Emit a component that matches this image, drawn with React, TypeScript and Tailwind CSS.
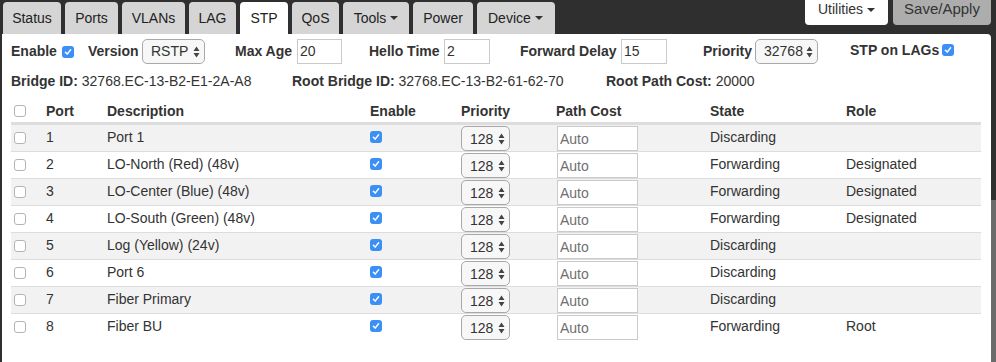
import React from "react";

const tabs = [
  { label: "Status", w: "w-[58px]" },
  { label: "Ports", w: "w-[53px]" },
  { label: "VLANs", w: "w-[63px]" },
  { label: "LAG", w: "w-[47px]" },
  { label: "STP", w: "w-[48px]", active: true },
  { label: "QoS", w: "w-[47px]" },
  { label: "Tools", w: "w-[66px]", caret: true },
  { label: "Power", w: "w-[60px]" },
  { label: "Device", w: "w-[78px]", caret: true },
];

const ports = [
  { n: 1, desc: "Port 1", state: "Discarding", role: "" },
  { n: 2, desc: "LO-North (Red) (48v)", state: "Forwarding", role: "Designated" },
  { n: 3, desc: "LO-Center (Blue) (48v)", state: "Forwarding", role: "Designated" },
  { n: 4, desc: "LO-South (Green) (48v)", state: "Forwarding", role: "Designated" },
  { n: 5, desc: "Log (Yellow) (24v)", state: "Discarding", role: "" },
  { n: 6, desc: "Port 6", state: "Discarding", role: "" },
  { n: 7, desc: "Fiber Primary", state: "Discarding", role: "" },
  { n: 8, desc: "Fiber BU", state: "Forwarding", role: "Root" },
];

const cols = "grid grid-cols-[30px_61px_263px_91px_95px_154px_136px_140px]";

function Caret() {
  return (
    <svg width="8" height="4" viewBox="0 0 8 4" className="ml-[4px]">
      <path d="M0 0h8L4 4z" fill="#333" />
    </svg>
  );
}

function Arrows() {
  return (
    <svg width="7" height="12" viewBox="0 0 7 12">
      <path d="M3.5 0.5L6.5 5H0.5Z M0.5 7H6.5L3.5 11.5Z" fill="#444" />
    </svg>
  );
}

function Check({ on }: { on?: boolean }) {
  if (!on) {
    return <span className="block h-[12px] w-[12px] rounded-[3px] border border-[#b4b4b4] bg-white" />;
  }
  return (
    <span className="flex h-[12px] w-[12px] items-center justify-center rounded-[3px] bg-[#3b8ff6]">
      <svg width="10" height="10" viewBox="0 0 10 10">
        <path d="M2.4 5.2L4.2 7.1L7.6 2.8" fill="none" stroke="#fff" strokeWidth="1.5" strokeLinecap="round" strokeLinejoin="round" />
      </svg>
    </span>
  );
}

function Select({ value, w }: { value: string; w: string }) {
  return (
    <div className={`flex h-[25px] ${w} items-center justify-between rounded-[5px] border border-[#a8a8a8] bg-[#f7f7f7] pl-[8px] pr-[4px]`}>
      <span>{value}</span>
      <Arrows />
    </div>
  );
}

function Box({ value, w, placeholder }: { value?: string; w: string; placeholder?: string }) {
  return (
    <div className={`flex h-[25px] ${w} items-center border border-[#cacaca] bg-white pl-[2px]`}>
      {value ? <span>{value}</span> : <span className="text-[#6f6f6f]">{placeholder}</span>}
    </div>
  );
}

export default function App() {
  return (
    <div className="relative h-[362px] w-[996px] overflow-hidden bg-[#2f2f2f] font-['Liberation_Sans',Arial,sans-serif] text-[14px] text-[#333]">
      {/* tab strip */}
      <div className="flex h-[34px] items-start">
        <div className="ml-[3px] mt-[2px] flex h-[32px] gap-[4px]">
          {tabs.map((t) => (
            <div
              key={t.label}
              className={`flex h-[32px] ${t.w} items-center rounded-t-[4px] ${t.active ? "bg-white" : "bg-[#d5d5d5]"} ${t.label === "Device" ? "justify-start pl-[11px]" : "justify-center"} text-[#222]`}
            >
              <span>{t.label}</span>
              {t.caret && <Caret />}
            </div>
          ))}
        </div>
        <div className="ml-auto mr-[5px] flex gap-[5px]">
          <div className="flex h-[25px] w-[83px] items-start justify-center rounded-b-[4px] bg-white leading-[18px]">
            <span>Utilities</span>
            <span className="mt-[8px]"><Caret /></span>
          </div>
          <div className="flex h-[25px] w-[98px] items-start justify-center rounded-b-[4px] bg-[#adadad] text-[15px] leading-[18px]">
            Save/Apply
          </div>
        </div>
      </div>

      {/* panel */}
      <div className="ml-[2px] h-[328px] w-[989px] rounded-tr-[4px] bg-white pl-[9px] pt-[5px]">
        <div className="flex h-[25px] items-center font-bold">
          <div className="flex w-[77px] items-center">
            <span className="w-[51px]">Enable</span>
            <Check on />
          </div>
          <div className="flex w-[147px] items-center">
            <span className="w-[54px]">Version</span>
            <span className="font-normal"><Select value="RSTP" w="w-[63px]" /></span>
          </div>
          <div className="flex w-[134px] items-center">
            <span className="w-[62px] whitespace-nowrap">Max Age</span>
            <span className="font-normal"><Box value="20" w="w-[45px]" /></span>
          </div>
          <div className="flex w-[151px] items-center">
            <span className="w-[75px] whitespace-nowrap">Hello Time</span>
            <span className="font-normal"><Box value="2" w="w-[46px]" /></span>
          </div>
          <div className="flex w-[183px] items-center">
            <span className="w-[101px] whitespace-nowrap">Forward Delay</span>
            <span className="font-normal"><Box value="15" w="w-[46px]" /></span>
          </div>
          <div className="flex w-[147px] items-center">
            <span className="w-[52px]">Priority</span>
            <span className="font-normal"><Select value="32768" w="w-[63px]" /></span>
          </div>
          <div className="-mt-[3px] flex items-center">
            <span className="w-[92px] whitespace-nowrap">STP on LAGs</span>
            <Check on />
          </div>
        </div>

        <div className="mt-[7px] flex leading-[20px]">
          <div className="w-[281px]">
            <b>Bridge ID:</b> 32768.EC-13-B2-E1-2A-A8
          </div>
          <div className="w-[314px]">
            <b>Root Bridge ID:</b> 32768.EC-13-B2-61-62-70
          </div>
          <div>
            <b>Root Path Cost:</b> 20000
          </div>
        </div>

        <div className="mt-[4px] w-[970px]">
          <div className={`${cols} border-b-2 border-[#dddddd] pb-[1px] pt-[6px] font-bold leading-[20px]`}>
            <div className="flex items-center pl-[3px]"><Check /></div>
            <div className="pl-[5px]">Port</div>
            <div className="pl-[5px]">Description</div>
            <div className="pl-[5px]">Enable</div>
            <div className="pl-[5px]">Priority</div>
            <div className="pl-[5px]">Path Cost</div>
            <div className="pl-[5px]">State</div>
            <div className="pl-[5px]">Role</div>
          </div>
          {ports.map((p) => (
            <div
              key={p.n}
              className={`${cols} h-[27px] border-t border-[#dddddd] ${p.n % 2 === 1 ? "bg-[#f2f2f2]" : "bg-white"} leading-[20px]`}
            >
              <div className="pl-[3px] pt-[7px]"><Check /></div>
              <div className="pl-[5px] pt-[2px]">{p.n}</div>
              <div className="pl-[5px] pt-[2px]">{p.desc}</div>
              <div className="pl-[5px] pt-[6px]"><Check on /></div>
              <div className="pl-[5px] pt-[1px]"><Select value="128" w="w-[49px]" /></div>
              <div className="pl-[6px] pt-[1px]"><Box placeholder="Auto" w="w-[81px]" /></div>
              <div className="pl-[5px] pt-[2px]">{p.state}</div>
              <div className="pl-[5px] pt-[2px]">{p.role}</div>
            </div>
          ))}
        </div>
      </div>

      {/* overlay scrollbar thumb */}
      <div className="absolute bottom-0 right-0 top-[200px] w-[5px] bg-[#6b6b6b]" />
    </div>
  );
}
